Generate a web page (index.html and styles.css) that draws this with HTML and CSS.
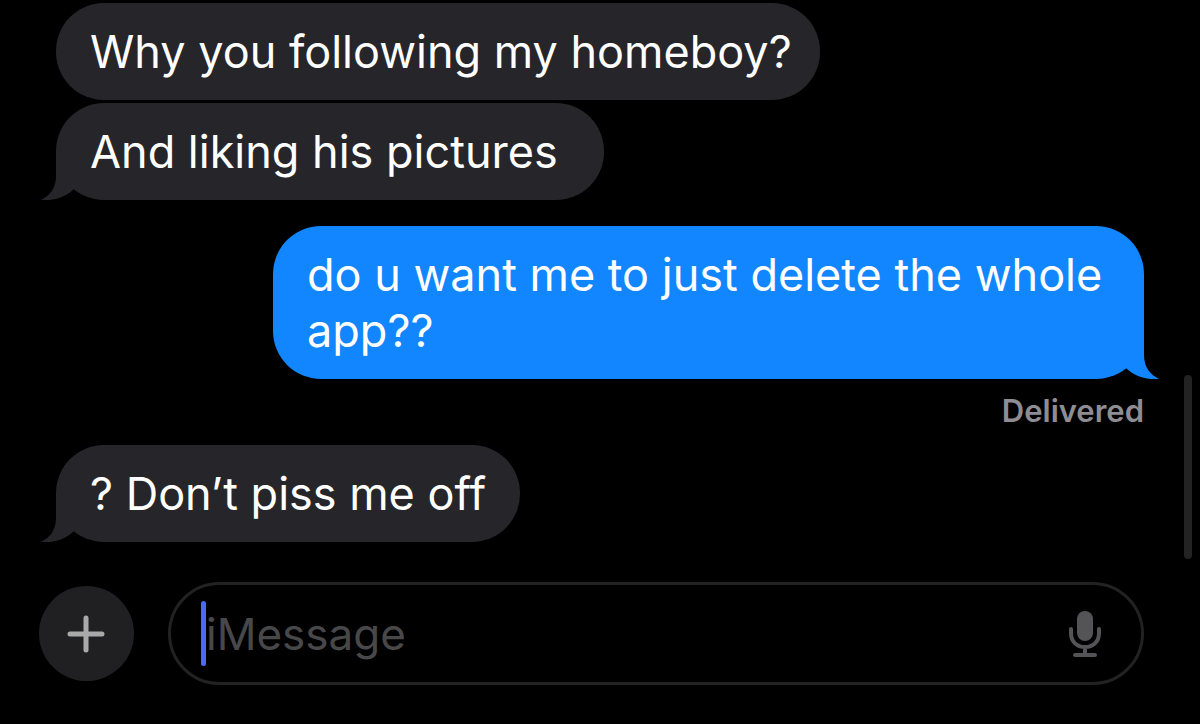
FILE: index.html
```html
<!DOCTYPE html>
<html lang="en">
<head>
<meta charset="utf-8">
<meta name="viewport" content="width=device-width, initial-scale=1">
<title>Messages</title>
<link rel="stylesheet" href="styles.css">
</head>
<body>
<main class="chat">
  <section class="thread" aria-label="Conversation">
    <p class="bubble received snug">Why you following my homeboy?</p>
    <p class="bubble received roomy">And liking his pictures
      <svg class="tail" viewBox="0 0 50 50" aria-hidden="true"><path d="M16 0V26C16 39 9 46 1 50C15 51 26 47 34 39L48 15Z"/></svg>
    </p>
    <p class="bubble sent">do u want me to just delete the whole app??
      <svg class="tail" viewBox="0 0 50 50" aria-hidden="true"><path d="M16 0V26C16 39 9 46 1 50C15 51 26 47 34 39L48 15Z"/></svg>
    </p>
    <p class="status">Delivered</p>
    <p class="bubble received reply">? Don’t piss me off
      <svg class="tail" viewBox="0 0 50 50" aria-hidden="true"><path d="M16 0V26C16 39 9 46 1 50C15 51 26 47 34 39L48 15Z"/></svg>
    </p>
    <span class="scrollbar"></span>
  </section>
  <form class="composer">
    <button class="add" type="button" aria-label="Add attachment">
      <svg width="39" height="39" viewBox="0 0 39 39" aria-hidden="true"><path d="M19 4V36M3 20H35"/></svg>
    </button>
    <div class="field">
      <span class="caret"></span>
      <input class="entry" type="text" placeholder="iMessage" aria-label="iMessage">
      <button class="mic" type="button" aria-label="Dictate">
        <svg width="34" height="48" viewBox="0 0 34 48" aria-hidden="true">
          <rect class="capsule" x="9" y="1" width="16" height="30" rx="8"/>
          <path d="M3 19V23C3 32 9 37 17 37S31 32 31 23V19M17 37V45M7 45H27"/>
        </svg>
      </button>
    </div>
  </form>
</main>
</body>
</html>
```
FILE: styles.css
```css
* {
  box-sizing: border-box;
}

body {
  margin: 0;
  background: #000;
  color: #fff;
  font-family: Inter, "Liberation Sans", sans-serif;
}

.chat {
  padding: 3px 56px 39px 39px;
}

.thread {
  position: relative;
  display: flex;
  flex-direction: column;
  padding-left: 17px;
}

.bubble {
  position: relative;
  align-self: flex-start;
  max-width: 871px;
  margin: 0 0 3px;
  padding: 21px 34px 20px;
  border-radius: 48px;
  font-size: 45px;
  line-height: 56px;
}

.received {
  background: #26262a;
  fill: #26262a;
}

.snug {
  padding-right: 28px;
}

.roomy {
  padding-right: 46px;
}

.sent {
  align-self: flex-end;
  margin: 23px 0 0;
  background: #1286ff;
  fill: #1286ff;
}

.reply {
  margin: 0;
}

.tail {
  position: absolute;
  left: -16px;
  bottom: 0;
  width: 50px;
  height: 50px;
}

.sent .tail {
  left: auto;
  right: -16px;
  transform: scaleX(-1);
}

.status {
  align-self: flex-end;
  margin: 14px 0 16px;
  color: #8d8d93;
  font-size: 31px;
  font-weight: 600;
  line-height: 36px;
}

.scrollbar {
  position: absolute;
  right: -48px;
  bottom: -17px;
  width: 8px;
  height: 184px;
  border-radius: 4px;
  background: #232323;
}

.composer {
  display: flex;
  align-items: center;
  gap: 34px;
  margin-top: 40px;
}

.add {
  display: flex;
  flex: none;
  align-items: center;
  justify-content: center;
  width: 95px;
  height: 95px;
  padding: 0;
  border: 0;
  border-radius: 50%;
  background: #202022;
}

.add path {
  fill: none;
  stroke: #a9a9a9;
  stroke-width: 5;
  stroke-linecap: round;
}

.field {
  display: flex;
  flex: 1;
  align-items: center;
  min-width: 0;
  padding: 16px 39px 16px 30px;
  border: 3px solid #222;
  border-radius: 52px;
}

.caret {
  flex: none;
  width: 5px;
  height: 65px;
  border-radius: 3px;
  background: #486bfa;
}

.entry {
  flex: 1;
  min-width: 0;
  height: 64px;
  padding: 0;
  border: 0;
  outline: 0;
  background: transparent;
  color: #fff;
  font-family: inherit;
  font-size: 44px;
}

.entry::placeholder {
  color: #48484a;
  opacity: 1;
}

.mic {
  display: flex;
  flex: none;
  padding: 0;
  border: 0;
  background: transparent;
}

.mic path {
  fill: none;
  stroke: #545456;
  stroke-width: 4;
  stroke-linecap: round;
}

.capsule {
  fill: #545456;
}
```
